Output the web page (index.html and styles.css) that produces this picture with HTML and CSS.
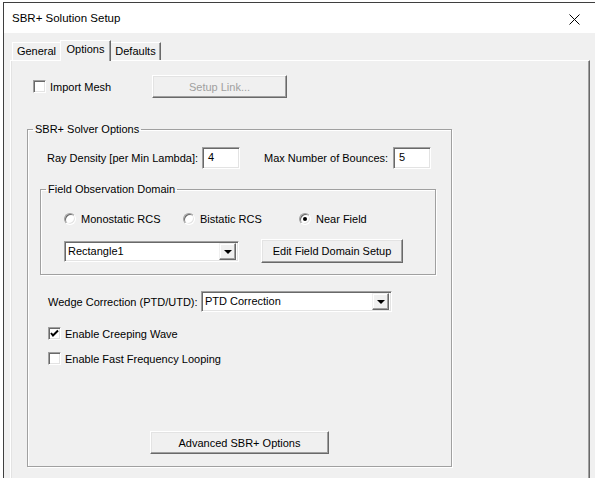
FILE: index.html
```html
<!DOCTYPE html>
<html lang="en">
<head>
  <meta charset="UTF-8">
  <title>SBR+ Solution Setup</title>
  <link rel="stylesheet" href="styles.css">
</head>
<body>
  <div class="window">
    <div class="titlebar">
      <span class="title">SBR+ Solution Setup</span>
      <svg class="close" width="11" height="11" viewBox="0 0 11 11">
        <path d="M0.5 0.5 L10.5 10.5 M10.5 0.5 L0.5 10.5" stroke="#000" stroke-width="1" fill="none"/>
      </svg>
    </div>

    <div class="dialog">
      <div class="tabs">
        <div class="tab tab-general">General</div>
        <div class="tab tab-active">Options</div>
        <div class="tab tab-defaults">Defaults</div>
      </div>

      <div class="panel">
        <div class="import-row">
          <label class="check import-check"><span class="box"></span>Import Mesh</label>
          <div class="btn btn-disabled btn-link">Setup Link...</div>
        </div>

        <fieldset class="group solver">
          <legend>SBR+ Solver Options</legend>
          <div class="solver-inner">
            <div class="ray-row">
              <span class="ray-label">Ray Density [per Min Lambda]:</span>
              <div class="field num">4</div>
              <span class="bounce-label">Max Number of Bounces:</span>
              <div class="field num">5</div>
            </div>

            <fieldset class="group domain">
              <legend>Field Observation Domain</legend>
              <div class="domain-inner">
                <div class="radio-row">
                  <label class="radio radio-mono"><span class="dot"></span>Monostatic RCS</label>
                  <label class="radio radio-bi"><span class="dot"></span>Bistatic RCS</label>
                  <label class="radio"><span class="dot on"></span>Near Field</label>
                </div>
                <div class="domain-row">
                  <div class="field combo combo-domain">
                    <span class="combo-text">Rectangle1</span>
                    <span class="combo-arrow"></span>
                  </div>
                  <div class="btn btn-edit">Edit Field Domain Setup</div>
                </div>
              </div>
            </fieldset>

            <div class="wedge-row">
              <span class="wedge-label">Wedge Correction (PTD/UTD):</span>
              <div class="field combo combo-wedge">
                <span class="combo-text">PTD Correction</span>
                <span class="combo-arrow"></span>
              </div>
            </div>

            <label class="check option-check creeping"><span class="box checked">
              <svg width="9" height="9" viewBox="0 0 9 9"><path d="M1 4 L3 6.5 L8 1.5" stroke="#000" stroke-width="2" fill="none"/></svg>
            </span>Enable Creeping Wave</label>
            <label class="check option-check fast"><span class="box"></span>Enable Fast Frequency Looping</label>

            <div class="btn btn-advanced">Advanced SBR+ Options</div>
          </div>
        </fieldset>
      </div>
    </div>
  </div>
</body>
</html>
```

FILE: styles.css
```css
html, body { margin: 0; padding: 0; background: #fff; overflow: hidden; }
body { width: 595px; height: 478px; font-family: "Liberation Sans", Arial, sans-serif; font-size: 11px; color: #000; }

.window { margin: 2px 0 0 3px; width: 600px; height: 480px; border-top: 1px solid #3f3f3f; border-left: 1px solid #3f3f3f; background: #f0f0f0; }
.titlebar { height: 30px; background: #fff; display: flex; align-items: center; padding-left: 8px; }
.title { font-size: 11.5px; flex: 1; }
.close { margin-right: 24px; margin-top: 2px; }

.dialog { padding-top: 7px; }
.tabs { height: 20px; display: flex; align-items: flex-end; padding-left: 8px; }
.tab { box-sizing: border-box; height: 18px; padding-top: 2px; line-height: 13px; text-align: center; border-top: 1px solid #fff; border-left: 1px solid #fff; border-right: 1px solid #696969; box-shadow: inset -1px 0 0 #a0a0a0; }
.tab-general { width: 48px; border-right: none; box-shadow: none; }
.tab-active { width: 51px; height: 21px; margin-bottom: -1px; position: relative; z-index: 1; background: #f0f0f0; }
.tab-defaults { width: 50px; border-left: none; }

.panel { margin-left: 6px; width: 578px; height: 420px; border-top: 1px solid #fff; border-left: 1px solid #fff; border-right: 1px solid #696969; box-shadow: inset -1px 0 0 #a0a0a0, inset 1px 0 0 #e3e3e3; }

/* 3d controls */
.btn { box-sizing: border-box; display: flex; align-items: center; justify-content: center; background: #f0f0f0; border: 1px solid; border-color: #fff #696969 #696969 #fff; box-shadow: inset -1px -1px 0 #a0a0a0, inset 1px 1px 0 #e3e3e3; }
.btn-disabled { color: #a0a0a0; }
.field { box-sizing: border-box; background: #fff; border: 1px solid; border-color: #a0a0a0 #fff #fff #a0a0a0; box-shadow: inset 1px 1px 0 #696969, inset -1px -1px 0 #e3e3e3; }
.num { width: 38px; height: 22px; padding: 3px 0 0 5px; line-height: 13px; }

.check { display: flex; align-items: center; }
.box { box-sizing: border-box; width: 13px; height: 13px; margin-right: 4px; background: #fff; border: 1px solid; border-color: #a0a0a0 #fff #fff #a0a0a0; box-shadow: inset 1px 1px 0 #696969, inset -1px -1px 0 #e3e3e3; display: flex; align-items: center; justify-content: center; }
.box svg { display: block; }

.radio { display: flex; align-items: center; }
.dot { box-sizing: border-box; width: 12px; height: 12px; margin-right: 5px; border-radius: 50%; background: #fff; border: 1px solid; border-color: #a0a0a0 #fff #fff #a0a0a0; box-shadow: inset 1px 1px 0 #696969, inset -1px -1px 0 #e3e3e3; display: flex; align-items: center; justify-content: center; }
.dot.on::after { content: ""; width: 4px; height: 4px; border-radius: 50%; background: #000; }

.combo { display: flex; align-items: center; padding: 0 2px 0 3px; }
.combo-text { flex: 1; line-height: 13px; }
.combo-arrow { box-sizing: border-box; width: 17px; height: 17px; background: #f0f0f0; border: 1px solid; border-color: #f0f0f0 #696969 #696969 #f0f0f0; box-shadow: inset -1px -1px 0 #a0a0a0, inset 1px 1px 0 #fff; display: flex; align-items: center; justify-content: center; }
.combo-arrow::after { content: ""; width: 0; height: 0; border-left: 4px solid transparent; border-right: 4px solid transparent; border-top: 4px solid #000; margin-top: 1px; }

/* groups */
.group { margin: 0; padding: 0; min-width: 0; box-sizing: border-box; border: 1px solid #a0a0a0; box-shadow: inset 1px 1px 0 #fff, 1px 1px 0 #fff; }
.group legend { padding: 0 2px; margin-left: 5px; line-height: 14px; }

.import-row { display: flex; align-items: center; margin-top: 14px; padding-left: 22px; height: 23px; }
.import-check { width: 119px; }
.btn-link { width: 135px; height: 23px; }

.solver { margin: 24px 0 0 16px; width: 425px; }
.solver-inner { padding: 11px 0 12px 12px; }

.ray-row { display: flex; align-items: center; height: 22px; padding-left: 7px; }
.ray-label { width: 155px; }
.bounce-label { width: 129px; margin-left: 24px; }

.domain { margin-top: 13px; width: 396px; }
.domain-inner { padding: 0 0 11px 23px; }
.radio-row { display: flex; align-items: center; height: 14px; margin-top: 16px; }
.radio-mono { width: 119px; }
.radio-bi { width: 116px; }
.domain-row { display: flex; align-items: center; height: 24px; margin-top: 13px; }
.combo-domain { width: 175px; height: 21px; }
.btn-edit { width: 142px; height: 24px; margin-left: 22px; }

.wedge-row { display: flex; align-items: center; height: 21px; margin-top: 16px; padding-left: 8px; }
.wedge-label { width: 153px; }
.combo-wedge { width: 191px; height: 21px; }

.option-check { height: 13px; padding-left: 8px; }
.creeping { margin-top: 15px; }
.fast { margin-top: 12px; }

.btn-advanced { width: 179px; height: 23px; margin: 66px 0 0 110px; }
```
